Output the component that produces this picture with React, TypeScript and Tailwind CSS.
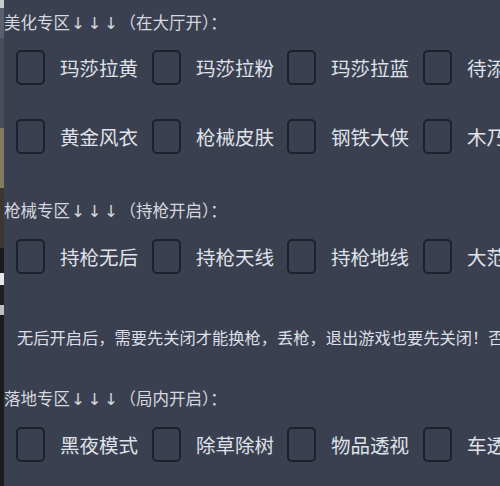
import React from "react";

const font = { fontFamily: '"Noto Sans CJK SC", "Noto Sans", sans-serif' };

function Row({ items }: { items: string[] }) {
  return (
    <div className="grid grid-cols-[136px_135px_136px_136px] h-[35px] pl-[12px] whitespace-nowrap">
      {items.map((t, i) => (
        <div key={i} className="flex items-center gap-[15px] h-[35px]">
          <div className="w-[29px] h-[35px] shrink-0 rounded-[5px] border-[2.5px] border-[#1d212c] bg-[#3b4051]" />
          <span className="text-[19.5px] leading-none text-[#dfe2e8]">{t}</span>
        </div>
      ))}
    </div>
  );
}

function Arrows() {
  return (
    <>
      <span className="inline-block w-[1em] text-center text-[#d5d8df]" style={{ fontFamily: '"DejaVu Sans", sans-serif' }}>{"\u2193\uFE0E"}</span>
      <span className="inline-block w-[1em] text-center text-[#d5d8df]" style={{ fontFamily: '"DejaVu Sans", sans-serif' }}>{"\u2193\uFE0E"}</span>
      <span className="inline-block w-[1em] text-center text-[#d5d8df]" style={{ fontFamily: '"DejaVu Sans", sans-serif' }}>{"\u2193\uFE0E"}</span>
    </>
  );
}

function Header({ title, sub, className }: { title: string; sub: string; className: string }) {
  return (
    <div className={"h-[24px] leading-[24px] text-[16.5px] text-[#d5d8df] whitespace-nowrap " + className}>
      {title}
      <Arrows />
      （{sub}）：
    </div>
  );
}

export default function App() {
  return (
    <div className="w-[500px] h-[486px] flex overflow-hidden bg-[#3b4051]" style={font}>
      <div className="w-[4px] h-full flex flex-col shrink-0">
        <div className="h-[8px] bg-[#c9cacd]" />
        <div className="h-[30px] bg-[#5b606d]" />
        <div className="h-[90px] bg-[#4a4d57]" />
        <div className="h-[60px] bg-[#857b63]" />
        <div className="h-[60px] bg-[#3b3630]" />
        <div className="h-[25px] bg-[#1a1a1a]" />
        <div className="h-[12px] bg-[#e6e6e6]" />
        <div className="h-[20px] bg-[#202020]" />
        <div className="h-[10px] bg-[#bdbdbd]" />
        <div className="flex-1 bg-[#1b1b1d]" />
      </div>
      <div className="flex-1 flex flex-col overflow-hidden">
        <Header className="mt-[10px]" title="美化专区" sub="在大厅开" />
        <div className="mt-[16px]">
          <Row items={["玛莎拉黄", "玛莎拉粉", "玛莎拉蓝", "待添加"]} />
        </div>
        <div className="mt-[34px]">
          <Row items={["黄金风衣", "枪械皮肤", "钢铁大侠", "木乃伊"]} />
        </div>
        <Header className="mt-[44px]" title="枪械专区" sub="持枪开启" />
        <div className="mt-[17px]">
          <Row items={["持枪无后", "持枪天线", "持枪地线", "大范围"]} />
        </div>
        <div className="mt-[51px] h-[24px] leading-[24px] text-[16.25px] text-[#dcdfe6] whitespace-nowrap pl-[13px]">
          无后开启后，需要先关闭才能换枪，丢枪，退出游戏也要先关闭！否则
        </div>
        <Header className="mt-[37px]" title="落地专区" sub="局内开启" />
        <div className="mt-[17px]">
          <Row items={["黑夜模式", "除草除树", "物品透视", "车透"]} />
        </div>
      </div>
    </div>
  );
}
